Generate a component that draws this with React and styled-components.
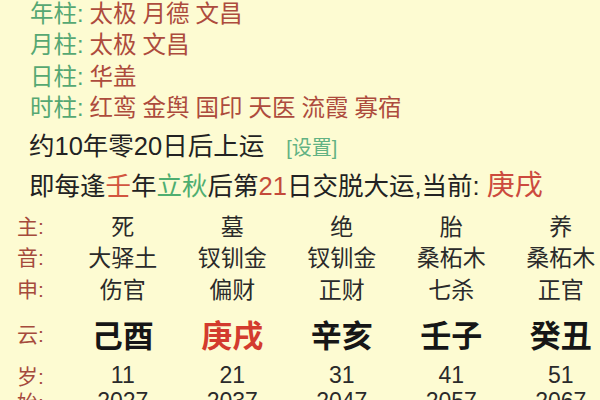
import React from "react";
import styled, { createGlobalStyle } from "styled-components";

const Global = createGlobalStyle`
  html, body {
    margin: 0;
    padding: 0;
    background: #fdfbd2;
    overflow: hidden;
  }
  body {
    font-family: "Liberation Sans", "Noto Sans CJK SC", sans-serif;
  }
`;

const Page = styled.div`
  width: 600px;
  height: 400px;
  overflow: hidden;
  background: #fdfbd2;
  color: #222;
`;

const ShenshaList = styled.div`
  margin-top: -1px;
  padding-left: 30px;
  font-size: 23.5px;
  line-height: 31.3px;
`;

const ShenshaRow = styled.div`
  display: flex;
  gap: 6px;
  white-space: nowrap;
`;

const PillarLabel = styled.span`
  color: #56a872;
`;

const Star = styled.span`
  color: #ad4b3d;
`;

const YunBlock = styled.div`
  margin-top: 4px;
  padding-left: 29px;
  font-size: 25.5px;
  line-height: 37px;
  white-space: nowrap;
`;

const YunLine = styled.div`
  display: flex;
  align-items: baseline;
`;

const Setting = styled.span`
  margin-left: 22px;
  color: #62b283;
  font-size: 20px;
`;

const Mark = styled.span`
  color: ${(p) => p.$color};
  font-size: ${(p) => p.$size || "inherit"};
`;

const Table = styled.div`
  margin-top: 5px;
  padding-left: 17px;
  display: grid;
  grid-template-columns: 51px repeat(5, 109.5px);
`;

const Cell = styled.div`
  height: ${(p) => p.$h}px;
  display: flex;
  align-items: center;
  justify-content: center;
  white-space: nowrap;
  font-size: ${(p) => (p.$big ? 31 : 23)}px;
  font-weight: ${(p) => (p.$big ? 700 : 400)};
  color: ${(p) => p.$color || "#2a2a2a"};
`;

const RowLabel = styled.div`
  height: ${(p) => p.$h}px;
  display: flex;
  align-items: center;
  font-size: 21px;
  color: #a54a3c;
  white-space: nowrap;
`;

const shensha = [
  ["年柱:", ["太极", "月德", "文昌"]],
  ["月柱:", ["太极", "文昌"]],
  ["日柱:", ["华盖"]],
  ["时柱:", ["红鸾", "金舆", "国印", "天医", "流霞", "寡宿"]],
];

const rows = [
  { label: "主:", h: 30, cells: ["死", "墓", "绝", "胎", "养"] },
  { label: "音:", h: 31, cells: ["大驿土", "钗钏金", "钗钏金", "桑柘木", "桑柘木"] },
  { label: "申:", h: 33, cells: ["伤官", "偏财", "正财", "七杀", "正官"] },
  { label: "云:", h: 58, big: true, cells: ["己酉", "庚戌", "辛亥", "壬子", "癸丑"], red: 1 },
  { label: "岁:", h: 26, cells: ["11", "21", "31", "41", "51"] },
  { label: "始:", h: 26, cells: ["2027", "2037", "2047", "2057", "2067"] },
];

export default function App() {
  return (
    <Page>
      <Global />
      <ShenshaList>
        {shensha.map(([label, stars]) => (
          <ShenshaRow key={label}>
            <PillarLabel>{label}</PillarLabel>
            {stars.map((s) => (
              <Star key={s}>{s}</Star>
            ))}
          </ShenshaRow>
        ))}
      </ShenshaList>

      <YunBlock>
        <YunLine>
          约10年零20日后上运<Setting>[设置]</Setting>
        </YunLine>
        <YunLine>
          即每逢<Mark $color="#d2553f">壬</Mark>年<Mark $color="#4fae70">立秋</Mark>后第
          <Mark $color="#c44a3a">21</Mark>日交脱大运,当前:&nbsp;
          <Mark $color="#cc4a3e" $size="28px">庚戌</Mark>
        </YunLine>
      </YunBlock>

      <Table>
        {rows.map((r) => (
          <React.Fragment key={r.label}>
            <RowLabel $h={r.h}>{r.label}</RowLabel>
            {r.cells.map((c, i) => (
              <Cell
                key={i}
                $h={r.h}
                $big={r.big}
                $color={r.red === i ? "#d33b2e" : r.big ? "#161616" : undefined}
              >
                {c}
              </Cell>
            ))}
          </React.Fragment>
        ))}
      </Table>
    </Page>
  );
}
